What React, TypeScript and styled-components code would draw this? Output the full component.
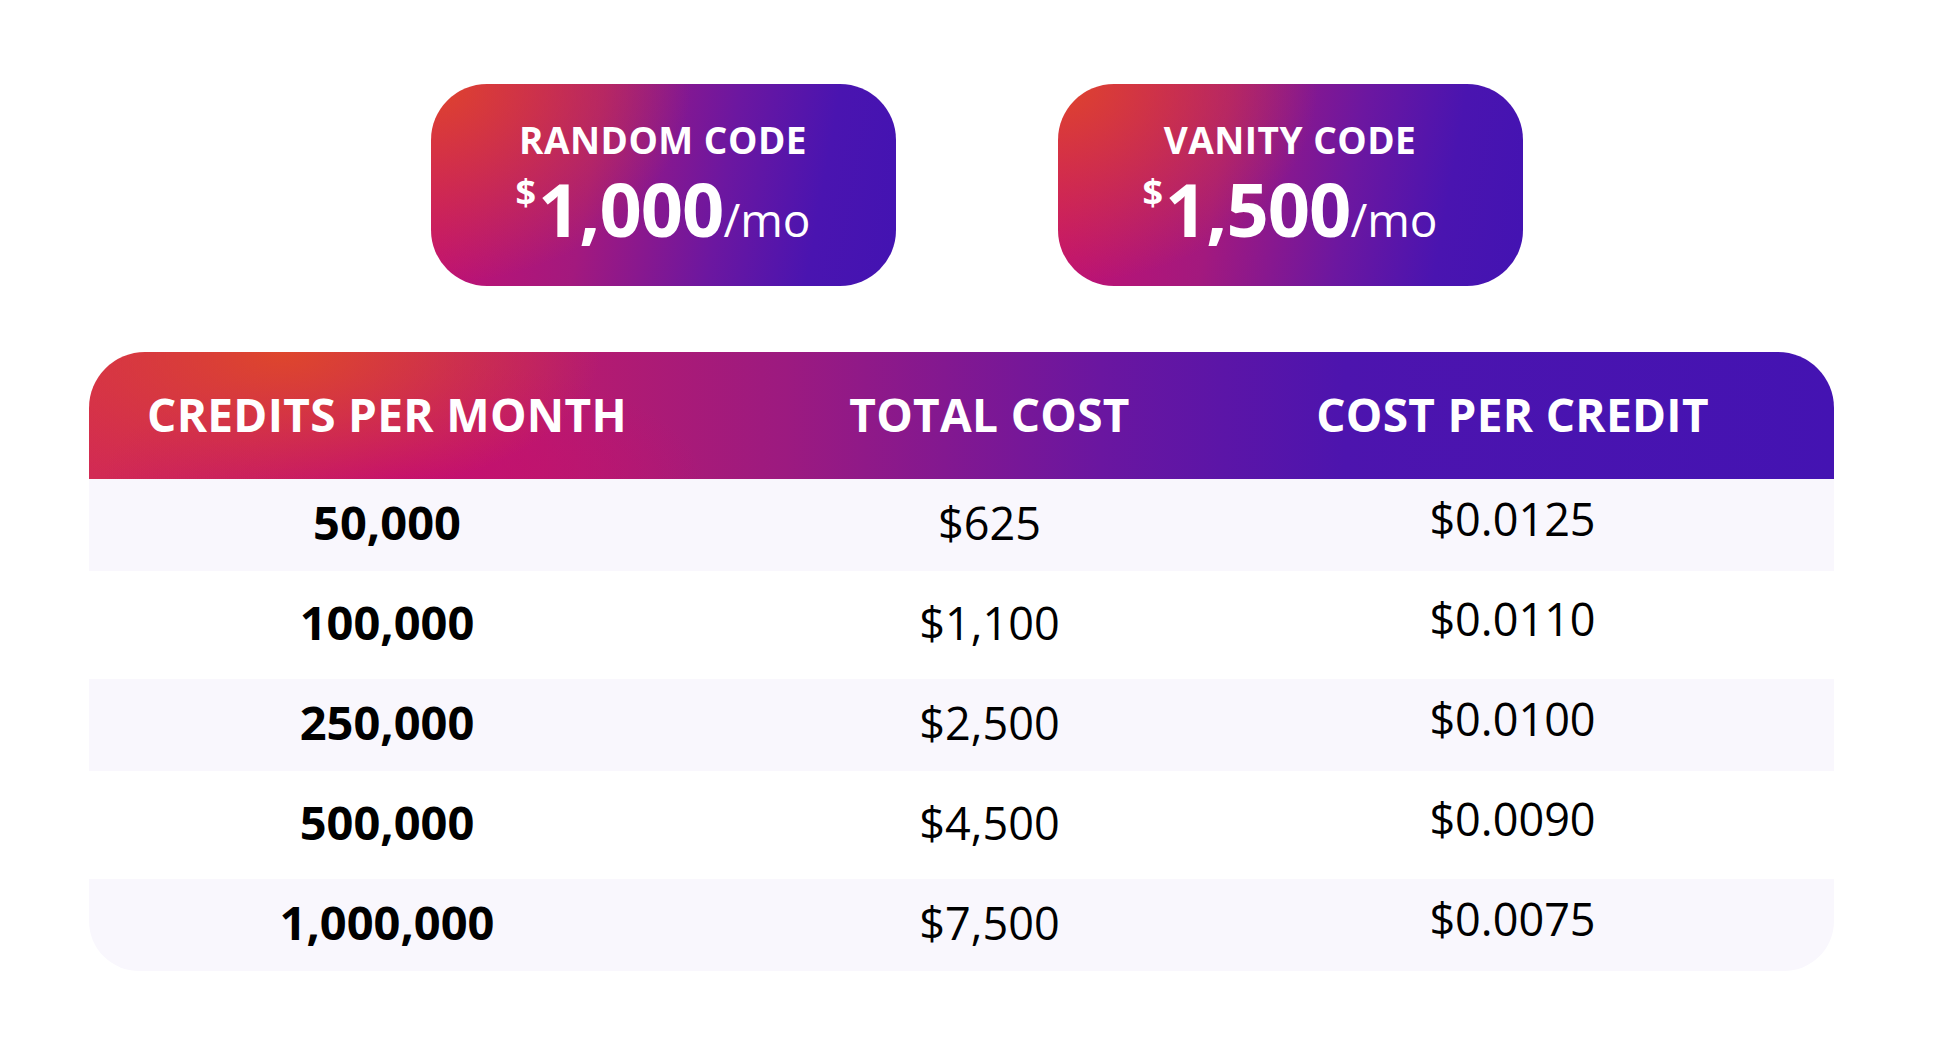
import * as React from 'react';
import styled, { createGlobalStyle } from 'styled-components';

const plans = [
  { name: 'RANDOM CODE', price: '1,000' },
  { name: 'VANITY CODE', price: '1,500' },
];

const rows = [
  { credits: '50,000', total: '$625', per: '$0.0125' },
  { credits: '100,000', total: '$1,100', per: '$0.0110' },
  { credits: '250,000', total: '$2,500', per: '$0.0100' },
  { credits: '500,000', total: '$4,500', per: '$0.0090' },
  { credits: '1,000,000', total: '$7,500', per: '$0.0075' },
];

const App = () => {
  return (
    <>
      <GlobalStyle />
      <Page>
        <Plans>
          {plans.map((p) => (
            <PlanCard key={p.name}>
              <PlanName>{p.name}</PlanName>
              <Price>
                <Dollar>$</Dollar>
                <Amount>{p.price}</Amount>
                <Per>/mo</Per>
              </Price>
            </PlanCard>
          ))}
        </Plans>
        <Table>
          <HeaderRow>
            <HeadCell>CREDITS PER MONTH</HeadCell>
            <HeadCell>TOTAL COST</HeadCell>
            <HeadCell>COST PER CREDIT</HeadCell>
          </HeaderRow>
          {rows.map((r, i) => (
            <Row key={r.credits} $shaded={i % 2 === 0} $last={i === rows.length - 1}>
              <Cell $bold>{r.credits}</Cell>
              <Cell>{r.total}</Cell>
              <Cell $raised>{r.per}</Cell>
            </Row>
          ))}
        </Table>
      </Page>
    </>
  );
};

export default App;

const GlobalStyle = createGlobalStyle`
  body {
    margin: 0;
    background: #ffffff;
    font-family: 'Open Sans', 'Noto Sans', sans-serif;
  }
`;

const Page = styled.div`
  width: 1939px;
  height: 1044px;
  padding: 84px 0 0 89px;
  box-sizing: border-box;
`;

const Plans = styled.div`
  display: flex;
  gap: 162px;
  width: 1745px;
  justify-content: center;
  padding-left: 30px;
  box-sizing: border-box;
`;

const PlanCard = styled.div`
  width: 465px;
  height: 202px;
  border-radius: 56px;
  box-sizing: border-box;
  padding-top: 34px;
  display: flex;
  flex-direction: column;
  align-items: center;
  color: #ffffff;
  background:
    radial-gradient(ellipse 260px 200px at 0% 0%, rgba(222, 68, 44, 1) 0%, rgba(222, 68, 44, 0) 100%),
    linear-gradient(100deg, #c80f70 0%, #a3197e 35%, #6c17a0 62%, #4a14b0 82%, #4313b2 100%);
`;

const PlanName = styled.div`
  font-weight: 700;
  font-size: 37px;
  line-height: 44px;
  letter-spacing: 0.5px;
`;

const Price = styled.div`
  display: flex;
  align-items: baseline;
  line-height: 1;
  margin-top: 10px;
`;

const Dollar = styled.span`
  font-weight: 700;
  font-size: 36px;
  align-self: flex-start;
  margin-top: 2px;
  margin-right: 2px;
`;

const Amount = styled.span`
  font-weight: 700;
  font-size: 74px;
  letter-spacing: -1px;
`;

const Per = styled.span`
  font-weight: 400;
  font-size: 46px;
`;

const Table = styled.div`
  margin-top: 66px;
  width: 1745px;
`;

const HeaderRow = styled.div`
  display: grid;
  grid-template-columns: 596px 609px 437px;
  padding-right: 103px;
  height: 127px;
  align-items: center;
  border-radius: 56px 56px 0 0;
  color: #ffffff;
  background:
    radial-gradient(ellipse 320px 150px at 11% 0%, rgba(222, 70, 44, 1) 0%, rgba(222, 70, 44, 0) 100%),
    radial-gradient(ellipse 300px 120px at 18% 100%, rgba(196, 14, 112, 1) 0%, rgba(196, 14, 112, 0) 100%),
    linear-gradient(90deg, #d22a54 0%, #bb1b6c 25%, #9c1a80 40%, #6a16a0 58%, #4d14ae 72%, #4413b2 100%);
`;

const HeadCell = styled.div`
  text-align: center;
  font-weight: 700;
  font-size: 46px;
  letter-spacing: 0.3px;
  padding-bottom: 4px;
`;

const Row = styled.div<{ $shaded: boolean; $last: boolean }>`
  display: grid;
  grid-template-columns: 596px 609px 437px;
  padding-right: 103px;
  align-items: center;
  height: ${(p) => (p.$shaded ? '92px' : '108px')};
  background: ${(p) => (p.$shaded ? '#f9f7fd' : '#ffffff')};
  border-radius: ${(p) => (p.$last ? '0 0 50px 50px' : '0')};
`;

const Cell = styled.div<{ $bold?: boolean; $raised?: boolean }>`
  text-align: center;
  color: #000000;
  font-size: ${(p) => (p.$bold ? '47px' : '45px')};
  font-weight: ${(p) => (p.$bold ? 700 : 400)};
  position: relative;
  top: ${(p) => (p.$raised ? '-7px' : '-3px')};
`;
